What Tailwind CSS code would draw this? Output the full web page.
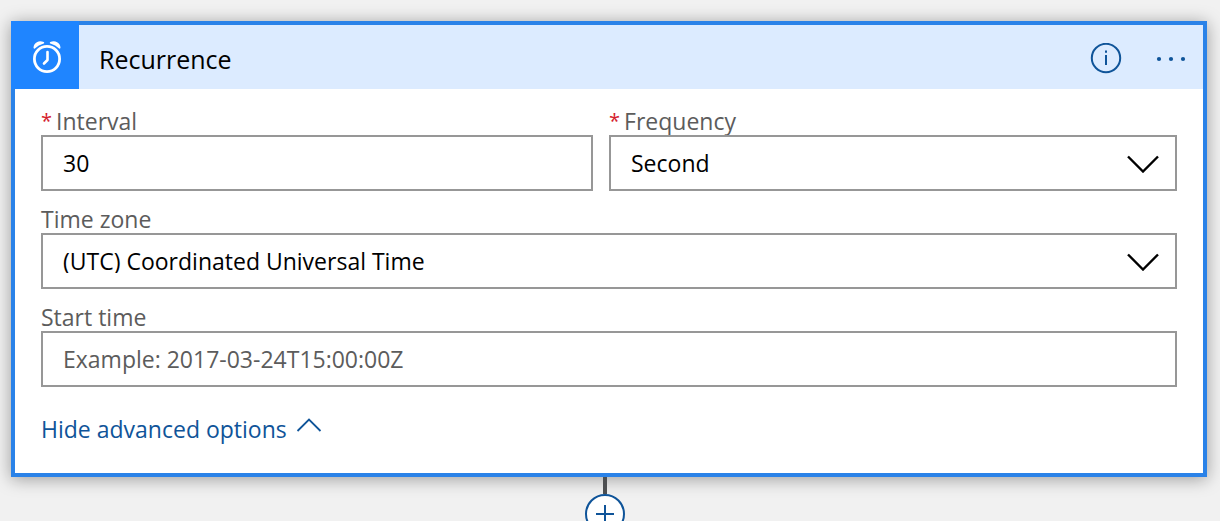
<!DOCTYPE html>
<html lang="en">
<head>
<meta charset="utf-8">
<meta name="viewport" content="width=device-width, initial-scale=1">
<title>Recurrence</title>
<script src="https://cdn.jsdelivr.net/npm/@tailwindcss/browser@4"></script>
</head>
<body class="bg-[#f1f1f1] font-['Open_Sans','Noto_Sans',sans-serif] text-[23px] leading-6 text-black">
<main class="h-screen overflow-hidden pt-[21px] pr-[13px] pl-[11px]">
  <section class="border-4 border-[#2a82e8] bg-white shadow-[0_2px_16px_rgba(0,0,0,0.36)]">
    <header class="flex h-16 items-center bg-[#dcebff]">
      <div class="-mt-1 -ml-1 flex h-[68px] w-[68px] shrink-0 items-center justify-center bg-[#1f85ff] pt-1 pl-1">
        <svg class="h-9 w-8" viewBox="0 0 32 36" fill="none" stroke="#fff" stroke-linecap="round" aria-hidden="true">
          <circle cx="16" cy="20" r="12.600" stroke-width="2.800"/>
          <path d="M16.500 13v8l-3.500 3.500" stroke-width="2.600" stroke-linejoin="round"/>
          <path d="M3.300 8.800C3.500 4.500 8 1.500 12.400 3.800 9 4.800 6 6.300 3.300 8.800Z" fill="#fff" stroke-width="1.600" stroke-linejoin="round"/>
          <path d="M28.700 8.800C28.500 4.500 24 1.500 19.600 3.800 23 4.800 26 6.300 28.700 8.800Z" fill="#fff" stroke-width="1.600" stroke-linejoin="round"/>
        </svg>
      </div>
      <h1 class="ml-5 flex-1 pt-1 text-[25px] leading-8">Recurrence</h1>
      <button type="button" aria-label="Information" class="mr-[33px] pt-1">
        <svg class="block h-8 w-8" viewBox="0 0 32 32" fill="none" stroke="#0f5499" stroke-width="2" aria-hidden="true">
          <circle cx="16" cy="15" r="14.200"/>
          <path d="M16 12v10M16 7.500v2.200"/>
        </svg>
      </button>
      <button type="button" aria-label="More options" class="mr-4 pt-1">
        <svg class="block h-8 w-8" viewBox="0 0 32 32" fill="#0f5499" aria-hidden="true">
          <circle cx="4" cy="16" r="2.100"/><circle cx="16" cy="16" r="2.100"/><circle cx="28" cy="16" r="2.100"/>
        </svg>
      </button>
    </header>
    <form class="flex flex-col gap-4 px-[26px] pt-5 pb-8">
      <div class="grid grid-cols-[552fr_568fr] gap-4">
        <div class="flex flex-col">
          <label for="interval" class="flex h-[26px] gap-1 text-[#5c5c5c]"><span class="text-[20px] text-[#d4202c]">*</span>Interval</label>
          <input id="interval" type="text" value="30" required class="h-14 w-full border-2 border-[#979797] bg-white px-5 outline-none">
        </div>
        <div class="flex flex-col">
          <label for="frequency" class="flex h-[26px] gap-1 text-[#5c5c5c]"><span class="text-[20px] text-[#d4202c]">*</span>Frequency</label>
          <div class="relative">
            <select id="frequency" required class="block h-14 w-full appearance-none border-2 border-[#979797] bg-white px-5 outline-none">
              <option>Second</option><option>Minute</option><option>Hour</option><option>Day</option><option>Week</option><option>Month</option>
            </select>
            <svg class="pointer-events-none absolute top-5 right-4 h-[18px] w-9" viewBox="0 0 36 18" fill="none" stroke="#000" stroke-width="2.400" aria-hidden="true"><path d="M3 1.500l15 15 15-15"/></svg>
          </div>
        </div>
      </div>
      <div class="flex flex-col">
        <label for="timezone" class="h-[26px] text-[#5c5c5c]">Time zone</label>
        <div class="relative">
          <select id="timezone" class="block h-14 w-full appearance-none border-2 border-[#979797] bg-white px-5 outline-none">
            <option>(UTC) Coordinated Universal Time</option>
          </select>
          <svg class="pointer-events-none absolute top-5 right-4 h-[18px] w-9" viewBox="0 0 36 18" fill="none" stroke="#000" stroke-width="2.400" aria-hidden="true"><path d="M3 1.500l15 15 15-15"/></svg>
        </div>
      </div>
      <div class="flex flex-col">
        <label for="start" class="h-[26px] text-[#5c5c5c]">Start time</label>
        <input id="start" type="text" placeholder="Example: 2017-03-24T15:00:00Z" class="h-14 w-full border-2 border-[#979797] bg-white px-5 outline-none placeholder:text-[#5c5c5c]">
      </div>
      <button type="button" class="mt-[14px] flex gap-2 self-start text-[#0f5499]">Hide advanced options
        <svg class="h-5 w-7" viewBox="0 0 28 20" fill="none" stroke="#0f5499" stroke-width="1.800" aria-hidden="true"><path d="M2.500 14L14 2.500 25.500 14"/></svg>
      </button>
    </form>
  </section>
  <div class="relative flex flex-col items-center pr-2">
    <div class="h-[17px] w-1 bg-[#4d4f51]"></div>
    <button type="button" aria-label="Add a step" class="flex h-10 w-10 items-center justify-center rounded-full border-2 border-[#0f5499] bg-white">
      <svg class="h-5 w-5" viewBox="0 0 20 20" fill="none" stroke="#0f5499" stroke-width="2" aria-hidden="true"><path d="M10 1v18M1 10h18"/></svg>
    </button>
  </div>
</main>
</body>
</html>
